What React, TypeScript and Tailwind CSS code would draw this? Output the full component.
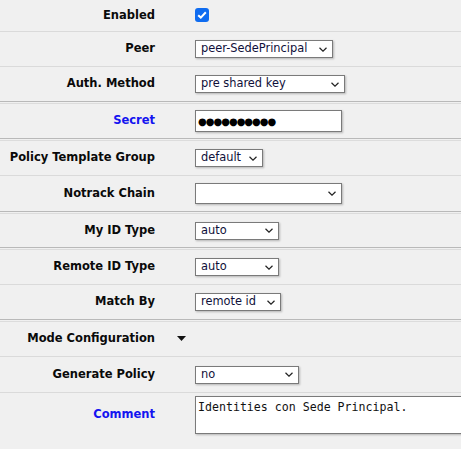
import React from "react";

const labelCls =
  "w-[155px] shrink-0 text-right font-bold text-[11.5px] text-[#0a0a0a] whitespace-nowrap";
const ctlFont = { fontFamily: '"DejaVu Sans", Verdana, sans-serif' };

function Chevron() {
  return (
    <svg width="8" height="5" viewBox="0 0 8 5" className="shrink-0">
      <path d="M0.5 0.8 L4 4.2 L7.5 0.8" fill="none" stroke="#222" strokeWidth="1.2" />
    </svg>
  );
}

function Select({ value, w, h = 18 }: { value: string; w: number; h?: number }) {
  return (
    <div
      className="flex items-center justify-between bg-white border border-[#7a7a7a] shadow-[1px_1px_2px_rgba(0,0,0,0.25)] pl-[5px] pr-[5px] text-[11.4px] text-[#10103a]"
      style={{ width: w, height: h, ...ctlFont }}
    >
      <span className="whitespace-nowrap leading-none">{value}</span>
      <Chevron />
    </div>
  );
}

function Light() {
  return <div className="h-px bg-[#dadada]" />;
}
function Dark() {
  return (
    <div className="flex flex-col">
      <div className="h-px bg-[#b9b9b9]" />
      <div className="h-px bg-[#f0f0f0]" />
      <div className="h-px bg-[#dcdcdc]" />
    </div>
  );
}

function Row({
  label,
  h,
  blue,
  children,
  gap = 40,
}: {
  label: string;
  h: number;
  blue?: boolean;
  children?: React.ReactNode;
  gap?: number;
}) {
  return (
    <div className="flex items-center" style={{ height: h }}>
      <div className={labelCls + (blue ? " !text-[#1414f0]" : "")}>{label}</div>
      <div className="flex items-center" style={{ marginLeft: gap }}>
        {children}
      </div>
    </div>
  );
}

export default function App() {
  return (
    <div
      className="w-[461px] h-[449px] overflow-hidden bg-[#f0f0f0]"
      style={{ fontFamily: '"DejaVu Sans", Verdana, sans-serif' }}
    >
      <Row label="Enabled" h={31}>
        <div className="w-[14px] h-[14px] rounded-[3px] bg-[#0f6cf0] flex items-center justify-center mt-[-1px]">
          <svg width="10" height="8" viewBox="0 0 10 8">
            <path d="M1.2 4.2 L3.8 6.6 L8.8 1.2" fill="none" stroke="#fff" strokeWidth="2" />
          </svg>
        </div>
      </Row>
      <Light />
      <Row label="Peer" h={34}>
        <Select value="peer-SedePrincipal" w={138} />
      </Row>
      <Light />
      <Row label="Auth. Method" h={34}>
        <Select value="pre shared key" w={150} />
      </Row>
      <Dark />
      <Row label="Secret" h={34} blue>
        <div
          className="flex items-center bg-white border border-[#7a7a7a] shadow-[1px_1px_2px_rgba(0,0,0,0.25)] pl-[2px] text-[10px] tracking-[-1px] text-black"
          style={{ width: 147, height: 22, ...ctlFont }}
        >
          ●●●●●●●●●●
        </div>
      </Row>
      <Dark />
      <Row label="Policy Template Group" h={34}>
        <Select value="default" w={68} />
      </Row>
      <Light />
      <Row label="Notrack Chain" h={35}>
        <Select value="" w={147} h={21} />
      </Row>
      <Dark />
      <Row label="My ID Type" h={33}>
        <Select value="auto" w={84} />
      </Row>
      <Dark />
      <Row label="Remote ID Type" h={34}>
        <Select value="auto" w={84} />
      </Row>
      <Light />
      <Row label="Match By" h={34}>
        <Select value="remote id" w={86} />
      </Row>
      <Dark />
      <Row label="Mode Configuration" h={34} gap={22}>
        <svg width="9" height="5" viewBox="0 0 9 5" className="mt-[-2px]">
          <path d="M0 0 L9 0 L4.5 5 Z" fill="#111" />
        </svg>
      </Row>
      <Light />
      <Row label="Generate Policy" h={35}>
        <Select value="no" w={104} />
      </Row>
      <Light />
      <div className="flex items-start pt-[3px]">
        <div className="h-[38px] flex items-center">
          <div className={labelCls + " !text-[#1414f0]"}>Comment</div>
        </div>
        <div
          className="ml-[40px] w-[290px] h-[38px] shrink-0 bg-white border border-[#7a7a7a] shadow-[1px_1px_2px_rgba(0,0,0,0.25)] pl-[2px] pt-[3px] text-[11.6px] leading-[14px] text-[#111] whitespace-nowrap"
          style={{ fontFamily: '"DejaVu Sans Mono", "Liberation Mono", monospace' }}
        >
          Identities con Sede Principal.
        </div>
      </div>
    </div>
  );
}
